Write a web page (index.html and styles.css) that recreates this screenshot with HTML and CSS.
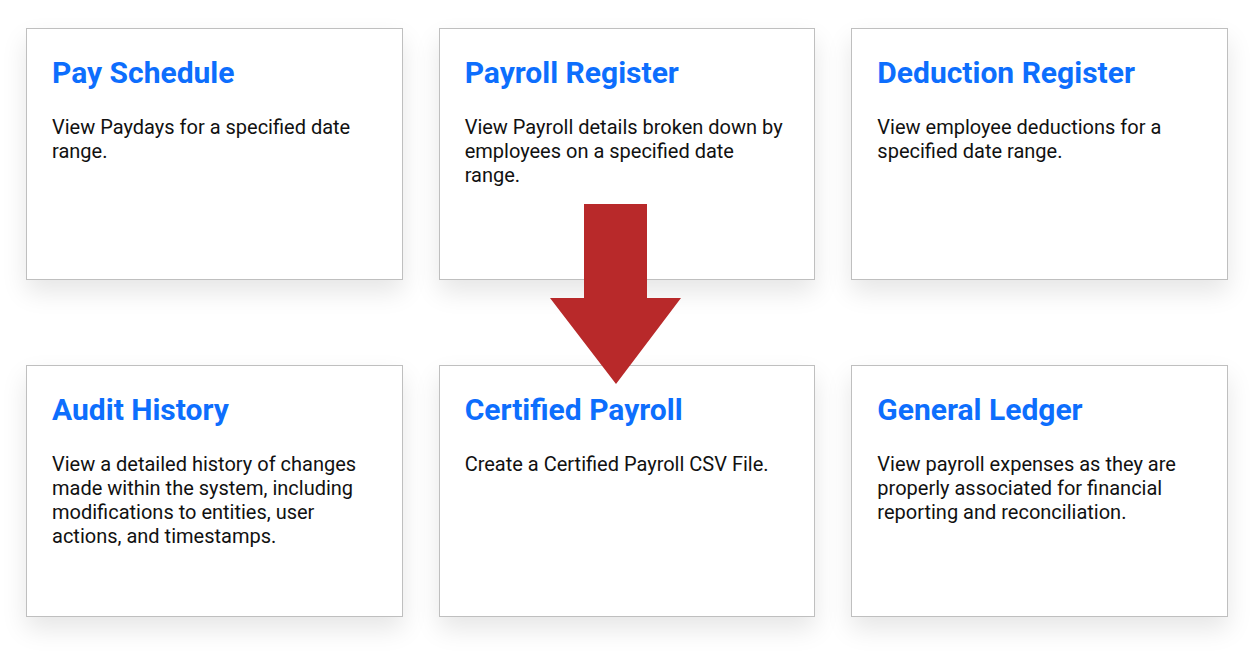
FILE: index.html
```html
<!DOCTYPE html>
<html lang="en">

<head>
    <meta charset="UTF-8">
    <meta name="viewport" content="width=device-width, initial-scale=1.0">
    <title>Reports</title>
    <link rel="stylesheet" href="styles.css">
</head>

<body>
    <div class="reports">
        <div class="report-grid">
            <div class="report-card">
                <h2 class="report-title">Pay Schedule</h2>
                <p class="report-text">View Paydays for a specified date range.</p>
            </div>
            <div class="report-card">
                <h2 class="report-title">Payroll Register</h2>
                <p class="report-text">View Payroll details broken down by employees on a specified date range.</p>
            </div>
            <div class="report-card">
                <h2 class="report-title">Deduction Register</h2>
                <p class="report-text">View employee deductions for a specified date range.</p>
            </div>
            <div class="report-card">
                <h2 class="report-title">Audit History</h2>
                <p class="report-text">View a detailed history of changes made within the system, including modifications to entities, user actions, and timestamps.</p>
            </div>
            <div class="report-card">
                <h2 class="report-title">Certified Payroll</h2>
                <p class="report-text">Create a Certified Payroll CSV File.</p>
            </div>
            <div class="report-card">
                <h2 class="report-title">General Ledger</h2>
                <p class="report-text">View payroll expenses as they are properly associated for financial reporting and reconciliation.</p>
            </div>
        </div>

        <!-- callout arrow pointing at Certified Payroll -->
        <svg class="callout-arrow" width="132" height="181" viewBox="0 0 132 181">
            <polygon points="34,0 97,0 97,94 131,94 66,180 0,94 34,94" fill="#b8292a" />
        </svg>
    </div>
</body>

</html>
```

FILE: styles.css
```css
body {
    margin: 0;
    background: #fff;
    font-family: Roboto, "Liberation Sans", sans-serif;
}

.reports {
    position: relative;
    padding: 28px 24px 40px 26px;
}

.report-grid {
    display: grid;
    grid-template-columns: repeat(3, 1fr);
    grid-auto-rows: 252px;
    column-gap: 36px;
    row-gap: 85px;
}


/* report cards */

.report-card {
    box-sizing: border-box;
    padding: 25px 24px 24px 25px;
    background: #fff;
    border: 1px solid #bfbfbf;
    box-shadow: 0 12px 24px rgba(0, 0, 0, 0.1);
}

.report-title {
    margin: 0 0 23px;
    font-size: 30px;
    font-weight: 700;
    line-height: 38px;
    color: #0d6efd;
}

.report-text {
    margin: 0;
    font-size: 20px;
    line-height: 24px;
    color: #111;
}

.callout-arrow {
    position: absolute;
    left: 550px;
    top: 204px;
}
```
